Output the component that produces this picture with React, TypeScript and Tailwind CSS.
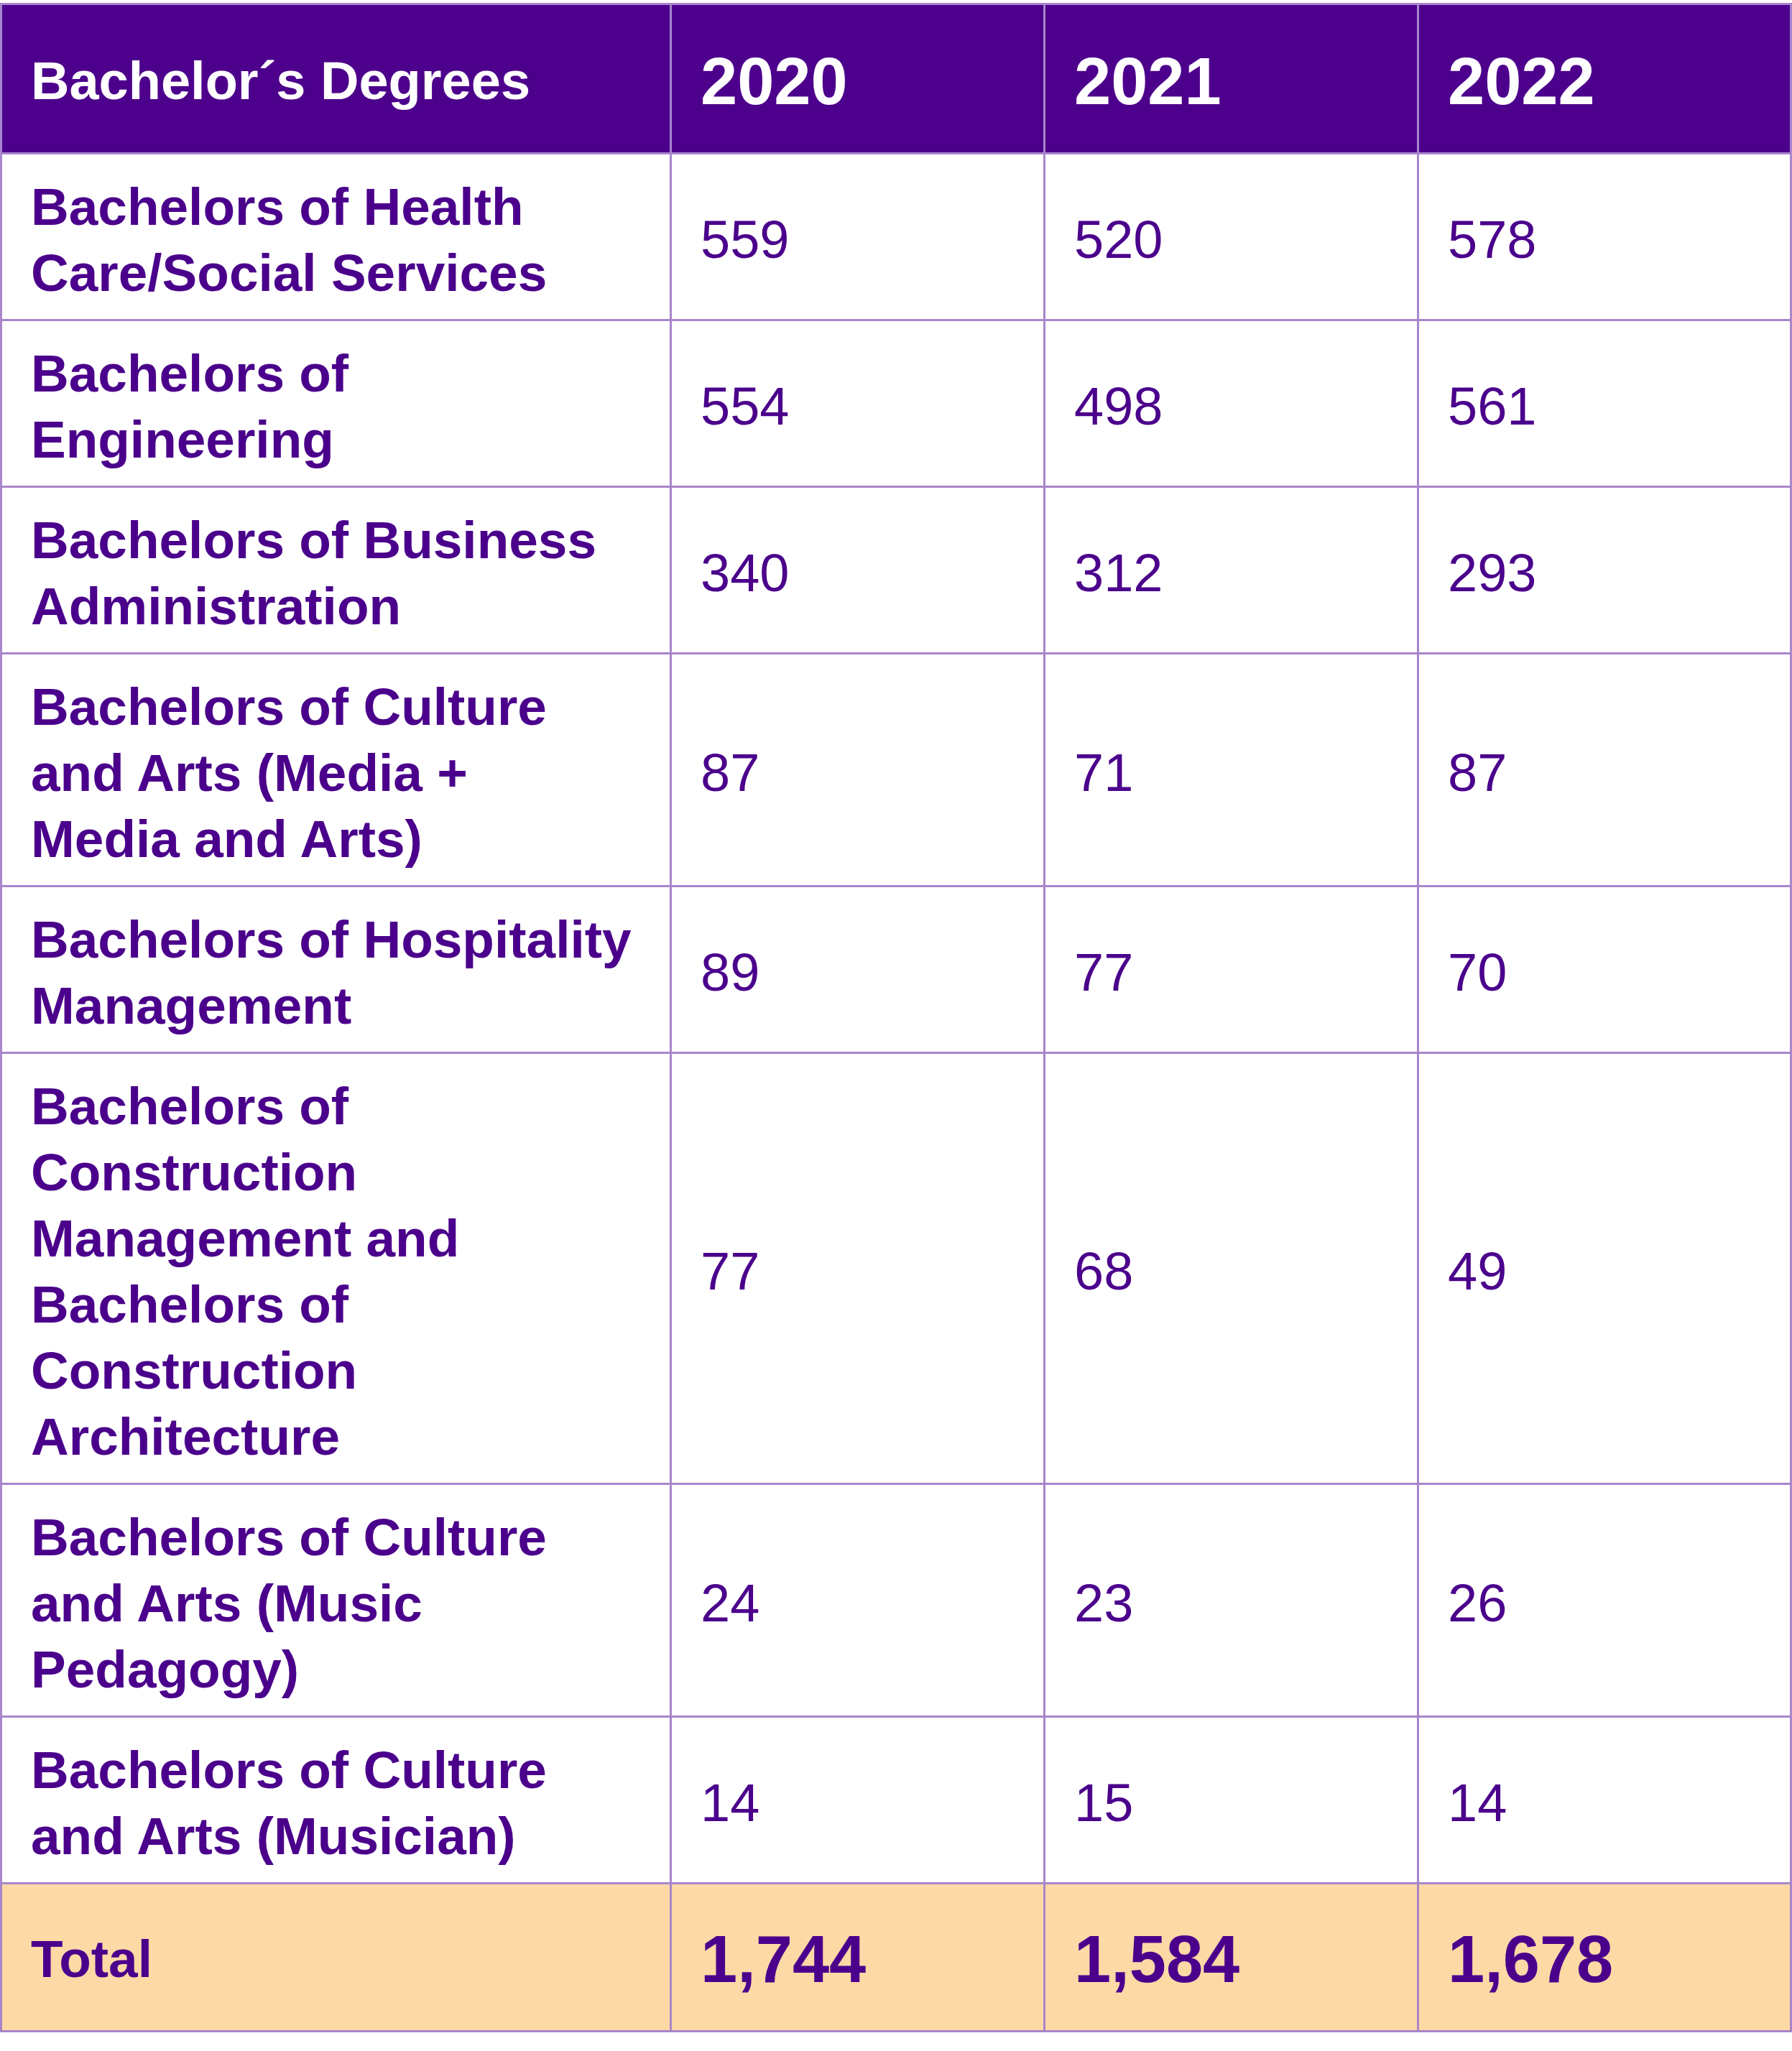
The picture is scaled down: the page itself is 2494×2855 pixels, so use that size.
const rows: { label: string[]; values: string[] }[] = [
  { label: ["Bachelors of Health", "Care/Social Services"], values: ["559", "520", "578"] },
  { label: ["Bachelors of", "Engineering"], values: ["554", "498", "561"] },
  { label: ["Bachelors of Business", "Administration"], values: ["340", "312", "293"] },
  { label: ["Bachelors of Culture", "and Arts (Media +", "Media and Arts)"], values: ["87", "71", "87"] },
  { label: ["Bachelors of Hospitality", "Management"], values: ["89", "77", "70"] },
  {
    label: [
      "Bachelors of",
      "Construction",
      "Management and",
      "Bachelors of",
      "Construction",
      "Architecture",
    ],
    values: ["77", "68", "49"],
  },
  { label: ["Bachelors of Culture", "and Arts (Music", "Pedagogy)"], values: ["24", "23", "26"] },
  { label: ["Bachelors of Culture", "and Arts (Musician)"], values: ["14", "15", "14"] },
];

const years = ["2020", "2021", "2022"];
const totals = ["1,744", "1,584", "1,678"];

const font = { fontFamily: '"Liberation Sans", Arial, sans-serif' };

// widths of the three value columns, left border included
const valueCols = ["w-[520px]", "w-[520px]", "flex-1"];

export default function App() {
  return (
    <div className="w-[2494px] min-h-[2855px] bg-white pt-[4px]" style={font}>
      <div className="w-[2494px] border-[3px] border-[#a886cb]">
        {/* header */}
        <div className="flex h-[205px] bg-[#4d008c] text-white">
          <div className="w-[929px] flex items-center pl-[40px] pt-[6px] text-[74px] font-bold">
            Bachelor´s Degrees
          </div>
          {years.map((y, i) => (
            <div
              key={y}
              className={`${valueCols[i]} flex items-center pl-[40px] pt-[6px] border-l-[3px] border-[#a886cb] text-[92px] font-bold`}
            >
              {y}
            </div>
          ))}
        </div>

        {rows.map((row) => (
          <div key={row.label.join(" ")} className="flex border-t-[3px] border-[#a886cb] bg-white text-[#4b008c]">
            <div className="w-[929px] pl-[40px] pt-[27px] pb-[18px] text-[73px] leading-[92px] font-bold whitespace-nowrap">
              {row.label.map((line, i) => (
                <div key={i}>{line}</div>
              ))}
            </div>
            {row.values.map((v, i) => (
              <div
                key={i}
                className={`${valueCols[i]} flex items-center pl-[40px] pt-[27px] pb-[18px] border-l-[3px] border-[#a886cb] text-[74px] leading-[92px]`}
              >
                {v}
              </div>
            ))}
          </div>
        ))}

        {/* total */}
        <div className="flex h-[206px] border-t-[3px] border-[#a886cb] bg-[#fdd9a6] text-[#4b008c]">
          <div className="w-[929px] flex items-center pl-[40px] pt-[5px] text-[73px] font-bold">Total</div>
          {totals.map((t, i) => (
            <div
              key={t}
              className={`${valueCols[i]} flex items-center pl-[40px] pt-[5px] border-l-[3px] border-[#a886cb] text-[92px] font-bold`}
            >
              {t}
            </div>
          ))}
        </div>
      </div>
    </div>
  );
}
